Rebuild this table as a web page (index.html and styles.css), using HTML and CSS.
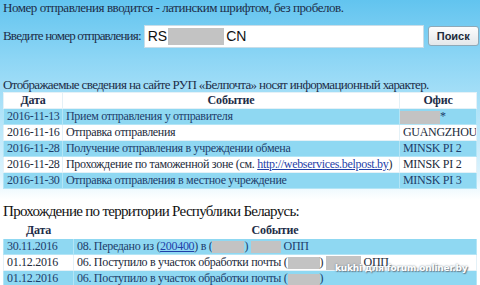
FILE: index.html
```html
<!DOCTYPE html>
<html lang="ru">
<head>
<meta charset="utf-8">
<link rel="stylesheet" href="styles.css">
</head>
<body>
<div class="page">
  <p class="note">Номер отправления вводится - латинским шрифтом, без пробелов.</p>
  <form class="search">
    <label class="search-label">Введите номер отправления:</label>
    <div class="input"><span>RS</span><span class="mask mask-input"></span><span>CN</span></div>
    <button type="button" class="btn">Поиск</button>
  </form>
  <p class="info">Отображаемые сведения на сайте РУП «Белпочта» носят информационный характер.</p>
  <table class="t1">
    <colgroup><col class="c-date"><col><col class="c-office"></colgroup>
    <thead>
      <tr><th>Дата</th><th>Событие</th><th>Офис</th></tr>
    </thead>
    <tbody>
      <tr class="blue"><td>2016-11-13</td><td>Прием отправления у отправителя</td><td><span class="mask mask-office"></span>*</td></tr>
      <tr><td>2016-11-16</td><td>Отправка отправления</td><td>GUANGZHOU</td></tr>
      <tr class="blue"><td>2016-11-28</td><td>Получение отправления в учреждении обмена</td><td>MINSK PI 2</td></tr>
      <tr><td>2016-11-28</td><td>Прохождение по таможенной зоне (см. <a href="#">http://webservices.belpost.by</a>)</td><td>MINSK PI 2</td></tr>
      <tr class="blue"><td>2016-11-30</td><td>Отправка отправления в местное учреждение</td><td>MINSK PI 3</td></tr>
    </tbody>
  </table>
  <h2 class="h2">Прохождение по территории Республики Беларусь:</h2>
  <table class="t2">
    <colgroup><col class="c2-date"><col></colgroup>
    <thead>
      <tr><th>Дата</th><th>Событие</th></tr>
    </thead>
    <tbody>
      <tr class="blue"><td>30.11.2016</td><td>08. Передано из (<a href="#">200400</a>) в (<span class="mask mask-a"></span>) <span class="mask mask-b"></span> ОПП</td></tr>
      <tr><td>01.12.2016</td><td>06. Поступило в участок обработки почты (<span class="mask mask-a"></span>) <span class="mask mask-c"></span> ОПП</td></tr>
      <tr class="blue"><td>01.12.2016</td><td>06. Поступило в участок обработки почты (<span class="mask mask-a"></span>)</td></tr>
    </tbody>
  </table>
  <div class="watermark">kukhi для forum.onliner.by</div>
</div>
</body>
</html>
```
FILE: styles.css
```css
html, body {
  margin: 0;
  padding: 0;
}
body {
  width: 480px;
  height: 285px;
  overflow: hidden;
  background: linear-gradient(to bottom, #62c4ef 0px, #8ed6f5 60px, #b5e5f9 120px, #dcf3fd 175px, #ffffff 200px, #ffffff 285px);
  font-family: "Liberation Serif", "Times New Roman", serif;
  color: #1d2d48;
}
.page {
  position: relative;
  padding: 0 3px;
  height: 285px;
}
.note {
  margin: 0;
  font-size: 13px;
  line-height: 15px;
  letter-spacing: -0.45px;
  white-space: nowrap;
}
.search {
  display: flex;
  align-items: center;
  margin-top: 9px;
  height: 24px;
}
.search-label {
  font-size: 13px;
  letter-spacing: -0.8px;
  white-space: nowrap;
  flex: none;
}
.input {
  flex: none;
  margin-left: 3px;
  width: 280px;
  height: 23px;
  box-sizing: border-box;
  background: #fff;
  border: 1px solid #c9dde8;
  display: flex;
  align-items: center;
  padding-left: 3px;
  font-family: "Liberation Sans", Arial, sans-serif;
  font-size: 14px;
  color: #111;
}
.mask {
  display: inline-block;
  background: #c3c3c3;
  vertical-align: middle;
}
.mask-input {
  width: 56px;
  height: 17px;
  margin: 0 2px 0 1px;
}
.btn {
  flex: none;
  margin-left: 4px;
  width: 51px;
  height: 20px;
  padding: 0;
  border: 1px solid #8ea9b8;
  border-radius: 3px;
  background: linear-gradient(#fdfdfd, #e3e7ea);
  font-family: "Liberation Sans", Arial, sans-serif;
  font-weight: bold;
  font-size: 11px;
  color: #1d2b3a;
}
.info {
  margin: 30px 0 0;
  font-size: 13px;
  line-height: 14px;
  letter-spacing: -0.63px;
  white-space: nowrap;
}
table {
  border-collapse: collapse;
  table-layout: fixed;
  width: 474px;
  font-size: 12px;
  letter-spacing: -0.3px;
}
td, th {
  padding: 0 3px;
  border: 1px solid #e4f1f7;
  text-align: left;
  white-space: nowrap;
  overflow: hidden;
}
th {
  background: #fff;
  font-weight: bold;
  text-align: center;
  height: 14px;
  font-size: 12px;
  letter-spacing: -0.2px;
}
tr { height: 16px; }
td { background: #fff; color: #222a3a; }
tr.blue td { background: #8fd8f2; color: #1e3d6a; border-color: #b3e5f6; }
a { color: #1f3fa8; }
.c-date { width: 59px; }
.c-office { width: 77px; }
.mask-office {
  width: 40px;
  height: 13px;
  margin-left: -3px;
}
.h2 {
  margin: 13px 0 1px;
  font-weight: normal;
  font-size: 15px;
  line-height: 19px;
  letter-spacing: -0.7px;
  color: #111;
  white-space: nowrap;
}
.t2 th { border-color: #fff; }
.c2-date { width: 70px; }
.mask-a { width: 32px; height: 12px; }
.mask-b { width: 30px; height: 12px; }
.mask-c { width: 35px; height: 14px; }
.watermark {
  position: absolute;
  left: 335px;
  top: 263px;
  white-space: nowrap;
  font-family: "DejaVu Sans", sans-serif;
  font-size: 9px;
  letter-spacing: -0.2px;
  font-weight: bold;
  color: #fff;
  text-shadow: 1px 1px 1px #6a7f8c, 0 0 2px #6a7f8c;
}
```
